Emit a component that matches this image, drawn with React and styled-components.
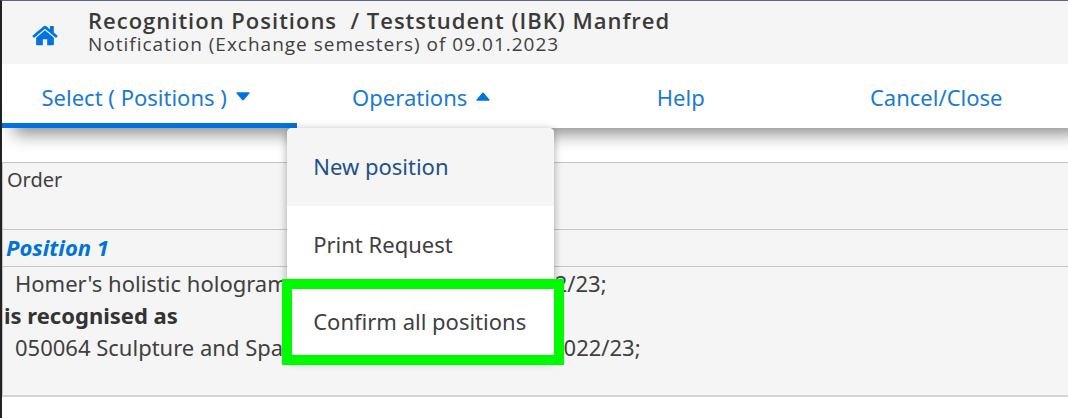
import React, { useState } from "react";
import styled, { createGlobalStyle } from "styled-components";

const GlobalStyle = createGlobalStyle`
  * {
    box-sizing: border-box;
  }
  body {
    margin: 0;
    overflow-x: hidden;
    background: #fff;
    color: #404040;
    font-family: "Noto Sans", "Open Sans", sans-serif;
    font-size: 22px;
  }
`;
const Page = styled.div`
  min-height: 100vh;
  border-top: 1px solid #5f6480;
  border-left: 2px solid #222226;
`;
const Header = styled.header`
  position: relative;
  z-index: 2;
  display: flex;
  align-items: flex-start;
  gap: 30px;
  height: 63px;
  padding: 6px 30px 0;
  background: #f5f5f5;
  font-family: "Open Sans", sans-serif;
`;
const HomeLink = styled.a`
  display: flex;
  padding-top: 18px;
  color: #0073e0;
`;
const Title = styled.h1`
  margin: 0;
  font-size: 22px;
  font-weight: 600;
  line-height: 26px;
  letter-spacing: 1px;
  white-space: pre;
  color: #3a3a3a;
`;
const Subtitle = styled.p`
  margin: 0;
  font-size: 19px;
  line-height: 22px;
  letter-spacing: 1px;
`;
const Nav = styled.nav`
  position: relative;
  z-index: 1;
  display: grid;
  grid-template-columns: 37fr 31fr 34fr 30fr;
  height: 64px;
  padding-right: 12px;
  background: #fff;
  box-shadow: 12px 6px 16px rgba(0, 0, 0, 0.45);
`;
const NavItem = styled.div`
  position: relative;
  display: flex;
`;
const NavButton = styled.button`
  flex: 1;
  display: flex;
  align-items: center;
  justify-content: center;
  gap: 9px;
  padding: ${(props) => (props.$active ? "6px 8px 0 0" : "6px 0 0")};
  border: none;
  border-bottom: 5px solid ${(props) => (props.$active ? "#0073e0" : "transparent")};
  background: none;
  color: #1a7ad4;
  font: inherit;
  cursor: pointer;
`;
const Menu = styled.ul`
  position: absolute;
  top: 100%;
  left: 50%;
  width: 267px;
  margin: 0 0 0 -134px;
  padding: 0;
  list-style: none;
  background: #fff;
  border-radius: 5px;
  box-shadow: 0 2px 8px rgba(0, 0, 0, 0.35);
`;
const MenuItem = styled.li`
  position: relative;

  &:first-child button {
    height: 78px;
    border-radius: 5px 5px 0 0;
  }
`;
const MenuButton = styled.button`
  display: block;
  width: 100%;
  height: 77px;
  padding: 0 26px 2px;
  border: none;
  background: ${(props) => (props.$hover ? "#f5f5f5" : "none")};
  color: ${(props) => (props.$hover ? "#1d5288" : "#404040")};
  font: inherit;
  text-align: left;
  white-space: nowrap;
  cursor: pointer;
`;
const Marker = styled.span`
  position: absolute;
  inset: -4px -10px -5px -5px;
  border: 10px solid #00fa00;
  pointer-events: none;
`;
const Content = styled.main`
  margin-top: 34px;
  border: 1px solid #c4c4c4;
  border-right: none;
  border-bottom: 2px solid #d4d4d4;
  background: #f5f5f5;
`;
const Order = styled.div`
  height: 67px;
  padding: 4px;
  border-bottom: 1px solid #c4c4c4;
  font-size: 20px;
  line-height: 26px;
`;
const PositionTitle = styled.h2`
  margin: 0;
  padding: 0 3px 2px;
  border-bottom: 1px solid #c4c4c4;
  color: #0073d8;
  font-size: 22px;
  font-style: italic;
  font-weight: 700;
  line-height: 34px;
`;
const Lines = styled.div`
  padding-bottom: 32px;
  line-height: 32px;
`;
const Course = styled.div`
  display: flex;
  padding-left: 12px;
`;
const CourseName = styled.span`
  width: ${(props) => props.$width}px;
  overflow: hidden;
  white-space: nowrap;
`;
const Recognised = styled.strong`
  display: block;
  padding-left: 1px;
  color: #333;
`;

const Caret = ({ up }) => (
  <svg width="14" height="9" viewBox="0 0 13 8" aria-hidden="true">
    <path
      d={up ? "M1 8Q-.4 8 .6 6.7L5.5.9Q6.5-.2 7.5.9L12.4 6.7Q13.4 8 12 8Z" : "M1 0Q-.4 0 .6 1.3L5.5 7.1Q6.5 8.2 7.5 7.1L12.4 1.3Q13.4 0 12 0Z"}
      fill="#0073e0"
    />
  </svg>
);

const HomeIcon = () => (
  <svg width="26" height="21" viewBox="0 0 27 22" fill="currentColor" aria-hidden="true">
    <path d="M13.5 5.6 4.2 13.4V20.5Q4.2 21.3 5 21.3H11.2V14.8H15.8V21.3H22Q22.8 21.3 22.8 20.5V13.4Z" />
    <path d="M26.4 11 22.7 7.9V1.6Q22.7 1 22.1 1H19.3Q18.7 1 18.7 1.6V4.6L14.9 1.4Q13.5.4 12.1 1.4L.6 11Q.1 11.5.5 12L1.5 13.1Q2 13.5 2.5 13.1L13.5 3.9 24.5 13.1Q25 13.5 25.5 13.1L26.5 12Q26.9 11.5 26.4 11Z" />
  </svg>
);

const operations = ["New position", "Print Request", "Confirm all positions"];

const App = () => {
  const [isOpen, setIsOpen] = useState(true);
  const [hovered, setHovered] = useState(0);

  return (
    <>
      <GlobalStyle />
      <Page>
        <Header>
          <HomeLink href="#" aria-label="Home">
            <HomeIcon />
          </HomeLink>
          <div>
            <Title>{"Recognition Positions  / Teststudent (IBK) Manfred"}</Title>
            <Subtitle>Notification (Exchange semesters) of 09.01.2023</Subtitle>
          </div>
        </Header>
        <Nav>
          <NavItem>
            <NavButton $active>
              Select ( Positions ) <Caret />
            </NavButton>
          </NavItem>
          <NavItem>
            <NavButton aria-expanded={isOpen} onClick={() => setIsOpen(!isOpen)}>
              Operations <Caret up={isOpen} />
            </NavButton>
            {isOpen && (
              <Menu>
                {operations.map((item, idx) => (
                  <MenuItem key={item}>
                    <MenuButton $hover={idx === hovered} onMouseEnter={() => setHovered(idx)}>
                      {item}
                    </MenuButton>
                    {idx === 2 && <Marker />}
                  </MenuItem>
                ))}
              </Menu>
            )}
          </NavItem>
          <NavItem>
            <NavButton>Help</NavButton>
          </NavItem>
          <NavItem>
            <NavButton>Cancel/Close</NavButton>
          </NavItem>
        </Nav>
        <Content>
          <Order>Order</Order>
          <PositionTitle>Position 1</PositionTitle>
          <Lines>
            <Course>
              <CourseName $width={502}>Homer's holistic holograms</CourseName>
              <span>2022/23;</span>
            </Course>
            <Recognised>is recognised as</Recognised>
            <Course>
              <CourseName $width={536}>050064 Sculpture and Space</CourseName>
              <span>2022/23;</span>
            </Course>
          </Lines>
        </Content>
      </Page>
    </>
  );
};

export default App;
